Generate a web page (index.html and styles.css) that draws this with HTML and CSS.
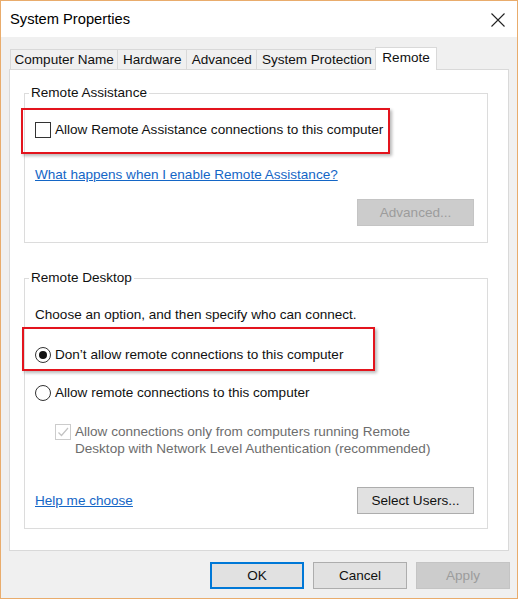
FILE: index.html
```html
<!DOCTYPE html>
<html>
<head>
<meta charset="utf-8">
<title>System Properties</title>
<link rel="stylesheet" href="styles.css">
</head>
<body>
<div class="window">
  <div class="titlebar">
    <span class="title">System Properties</span>
    <svg class="close" width="14" height="14" viewBox="0 0 14 14"><path d="M0.5 0.5 L13.5 13.5 M13.5 0.5 L0.5 13.5" stroke="#222" stroke-width="1.1" fill="none"/></svg>
  </div>
  <div class="tabs">
    <div class="tab first">Computer Name</div>
    <div class="tab">Hardware</div>
    <div class="tab">Advanced</div>
    <div class="tab">System Protection</div>
    <div class="tab active">Remote</div>
  </div>
  <div class="panel">
    <fieldset class="group g1">
      <legend>Remote Assistance</legend>
      <div class="row r-assist">
        <span class="checkbox"></span>
        <span class="label">Allow Remote Assistance connections to this computer</span>
      </div>
      <div class="link l-what">What happens when I enable Remote Assistance?</div>
      <div class="btnrow r-adv">
        <button class="btn disabled wide">Advanced...</button>
      </div>
    </fieldset>
    <fieldset class="group g2">
      <legend>Remote Desktop</legend>
      <div class="text t-choose">Choose an option, and then specify who can connect.</div>
      <div class="row r-radio1">
        <span class="radio checked"><span class="dot"></span></span>
        <span class="label">Don’t allow remote connections to this computer</span>
      </div>
      <div class="row r-radio2">
        <span class="radio"></span>
        <span class="label">Allow remote connections to this computer</span>
      </div>
      <div class="nla">
        <span class="checkbox dis">
          <svg width="14" height="14" viewBox="0 0 14 14"><path d="M2.5 7.5 L5.5 10.5 L12 3" stroke="#c3c3c3" stroke-width="1.2" fill="none"/></svg>
        </span>
        <span class="nla-text">Allow connections only from computers running Remote<br>Desktop with Network Level Authentication (recommended)</span>
      </div>
      <div class="btnrow r-bottom">
        <span class="link">Help me choose</span>
        <button class="btn wide">Select Users...</button>
      </div>
    </fieldset>
  </div>
  <div class="dialog-buttons">
    <button class="btn dlg default">OK</button>
    <button class="btn dlg">Cancel</button>
    <button class="btn dlg disabled">Apply</button>
  </div>
  <div class="mark mark1"></div>
  <div class="mark mark2"></div>
</div>
</body>
</html>
```

FILE: styles.css
```css
html, body {
  margin: 0;
  padding: 0;
  background: #ffffff;
}
body {
  font-family: "Liberation Sans", Arial, sans-serif;
  font-size: 13.55px;
  color: #111;
}
.window {
  position: relative;
  width: 518px;
  height: 599px;
  box-sizing: border-box;
  border: 1px solid #e9ac6c;
  background: #f0f0f0;
  display: flex;
  flex-direction: column;
}
.titlebar {
  height: 36px;
  background: #ffffff;
  display: flex;
  align-items: center;
  justify-content: space-between;
  padding: 0 12px 0 9px;
}
.title {
  font-size: 14.7px;
  color: #000;
}
.close {
  display: block;
  margin-top: 1px;
}
.tabs {
  display: flex;
  align-items: flex-end;
  margin: 10px 8px 0 9px;
  height: 22px;
  position: relative;
  z-index: 2;
}
.tab {
  height: 20px;
  box-sizing: border-box;
  line-height: 19px;
  padding: 0 4.5px;
  border: 1px solid #d9d9d9;
  border-bottom: none;
  margin-left: -1px;
  background: #f0f0f0;
  color: #111;
  white-space: nowrap;
}
.tab.first {
  margin-left: 0;
  padding: 0 3.5px;
}
.tab.active {
  height: 23px;
  line-height: 20px;
  margin-left: -2px;
  margin-bottom: -1px;
  padding: 0 6px;
  background: #ffffff;
  position: relative;
}
.panel {
  margin: 0 8px;
  height: 482px;
  box-sizing: border-box;
  background: #ffffff;
  border: 1px solid #d9d9d9;
  padding: 0 20px 0 14px;
  display: flex;
  flex-direction: column;
}
.group {
  margin: 0;
  padding: 0 13px 0 10px;
  border: 1px solid #dcdcdc;
  min-width: 0;
}
.group legend {
  padding: 0 2px;
  margin-left: -6px;
  line-height: 16px;
  color: #111;
}
.g1 {
  margin-top: 15px;
  padding-bottom: 16px;
}
.g2 {
  margin-top: 27px;
  padding-bottom: 14px;
}
.row {
  display: flex;
  align-items: center;
  height: 20px;
}
.label {
  margin-left: 4px;
  line-height: 18px;
}
.r-assist { margin-top: 19px; }
.l-what { margin-top: 26px; }
.r-adv { margin-top: 15px; }
.t-choose { margin-top: 20px; line-height: 18px; }
.r-radio1 { margin-top: 21px; }
.r-radio2 { margin-top: 18px; }
.link {
  color: #1466c6;
  text-decoration: underline;
  line-height: 18px;
}
.text {
  color: #111;
}
.checkbox {
  width: 16px;
  height: 16px;
  box-sizing: border-box;
  border: 1px solid #333;
  background: #fff;
  display: flex;
  align-items: center;
  justify-content: center;
  flex: none;
}
.checkbox.dis {
  border-color: #cccccc;
  margin-top: 1px;
}
.radio {
  width: 16px;
  height: 16px;
  box-sizing: border-box;
  border: 1px solid #333;
  border-radius: 50%;
  background: #fff;
  display: flex;
  align-items: center;
  justify-content: center;
  flex: none;
}
.radio .dot {
  width: 8px;
  height: 8px;
  border-radius: 50%;
  background: #111;
}
.nla {
  margin-top: 20px;
  margin-left: 20px;
  display: flex;
  align-items: flex-start;
}
.nla-text {
  margin-left: 4px;
  line-height: 17px;
  color: #6d6d6d;
}
.btnrow {
  display: flex;
  align-items: center;
  justify-content: flex-end;
}
.r-bottom {
  margin-top: 30px;
  justify-content: space-between;
}
.btn {
  font-family: "Liberation Sans", Arial, sans-serif;
  font-size: 13.55px;
  height: 27px;
  box-sizing: border-box;
  background: #e1e1e1;
  border: 1px solid #adadad;
  color: #111;
  padding: 0;
  margin: 0;
}
.btn.wide {
  width: 117px;
}
.btn.disabled {
  background: #cccccc;
  border-color: #c4c4c4;
  color: #9c9c9c;
}
.btn.default {
  border: 2px solid #0078d7;
}
.dialog-buttons {
  display: flex;
  justify-content: flex-end;
  gap: 9px;
  margin: 11px 7px 0 0;
}
.btn.dlg {
  width: 94px;
}
.mark {
  position: absolute;
  box-sizing: border-box;
  border: 2px solid #e3141d;
  box-shadow: 2px 2px 3px rgba(0, 0, 0, 0.28);
}
.mark1 {
  left: 20px;
  top: 107px;
  width: 369px;
  height: 46px;
}
.mark2 {
  left: 21px;
  top: 326px;
  width: 353px;
  height: 44px;
}
```
